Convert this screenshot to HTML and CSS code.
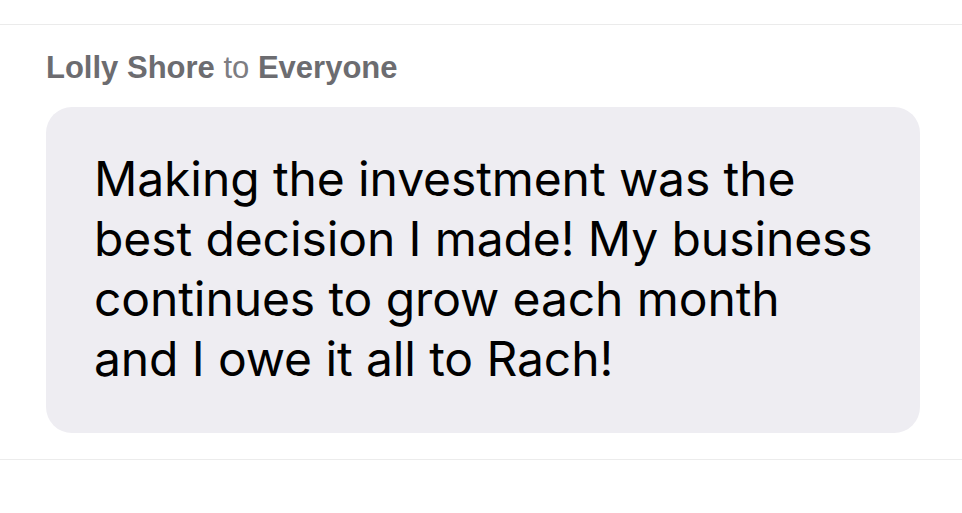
FILE: index.html
```html
<!DOCTYPE html>
<html>
<head>
<meta charset="utf-8">
<link rel="stylesheet" href="styles.css">
</head>
<body>
<div class="chat">
  <div class="divider-top"></div>
  <div class="message">
    <div class="sender"><span class="name">Lolly Shore</span> <span class="to">to</span> <span class="name">Everyone</span></div>
    <div class="bubble">
      <p class="text">Making the investment was the<br>best decision I made! My business<br>continues to grow each month<br>and I owe it all to Rach!</p>
    </div>
  </div>
  <div class="divider-bottom"></div>
</div>
</body>
</html>
```
FILE: styles.css
```css
html, body {
  margin: 0;
  padding: 0;
  background: #ffffff;
}
.chat {
  width: 962px;
  height: 513px;
  overflow: hidden;
}
.divider-top {
  height: 24px;
  border-bottom: 1px solid #ebebeb;
}
.message {
  padding: 0 42px 0 46px;
}
.sender {
  font-family: "Liberation Sans", Arial, sans-serif;
  font-size: 31px;
  line-height: 34px;
  color: #6e6e73;
  margin-top: 26px;
  letter-spacing: 0;
}
.sender .name {
  font-weight: bold;
  color: #6c6c70;
}
.sender .to {
  font-weight: normal;
  color: #7d7d82;
}
.bubble {
  margin-top: 22px;
  background: #eeedf2;
  border-radius: 26px;
  padding: 42px 40px 44px 48px;
}
.text {
  margin: 0;
  font-family: Inter, "Noto Sans", sans-serif;
  font-size: 48px;
  line-height: 60px;
  color: #000000;
  letter-spacing: -0.1px;
}
.divider-bottom {
  margin-top: 26px;
  border-top: 1px solid #ececec;
}
```
